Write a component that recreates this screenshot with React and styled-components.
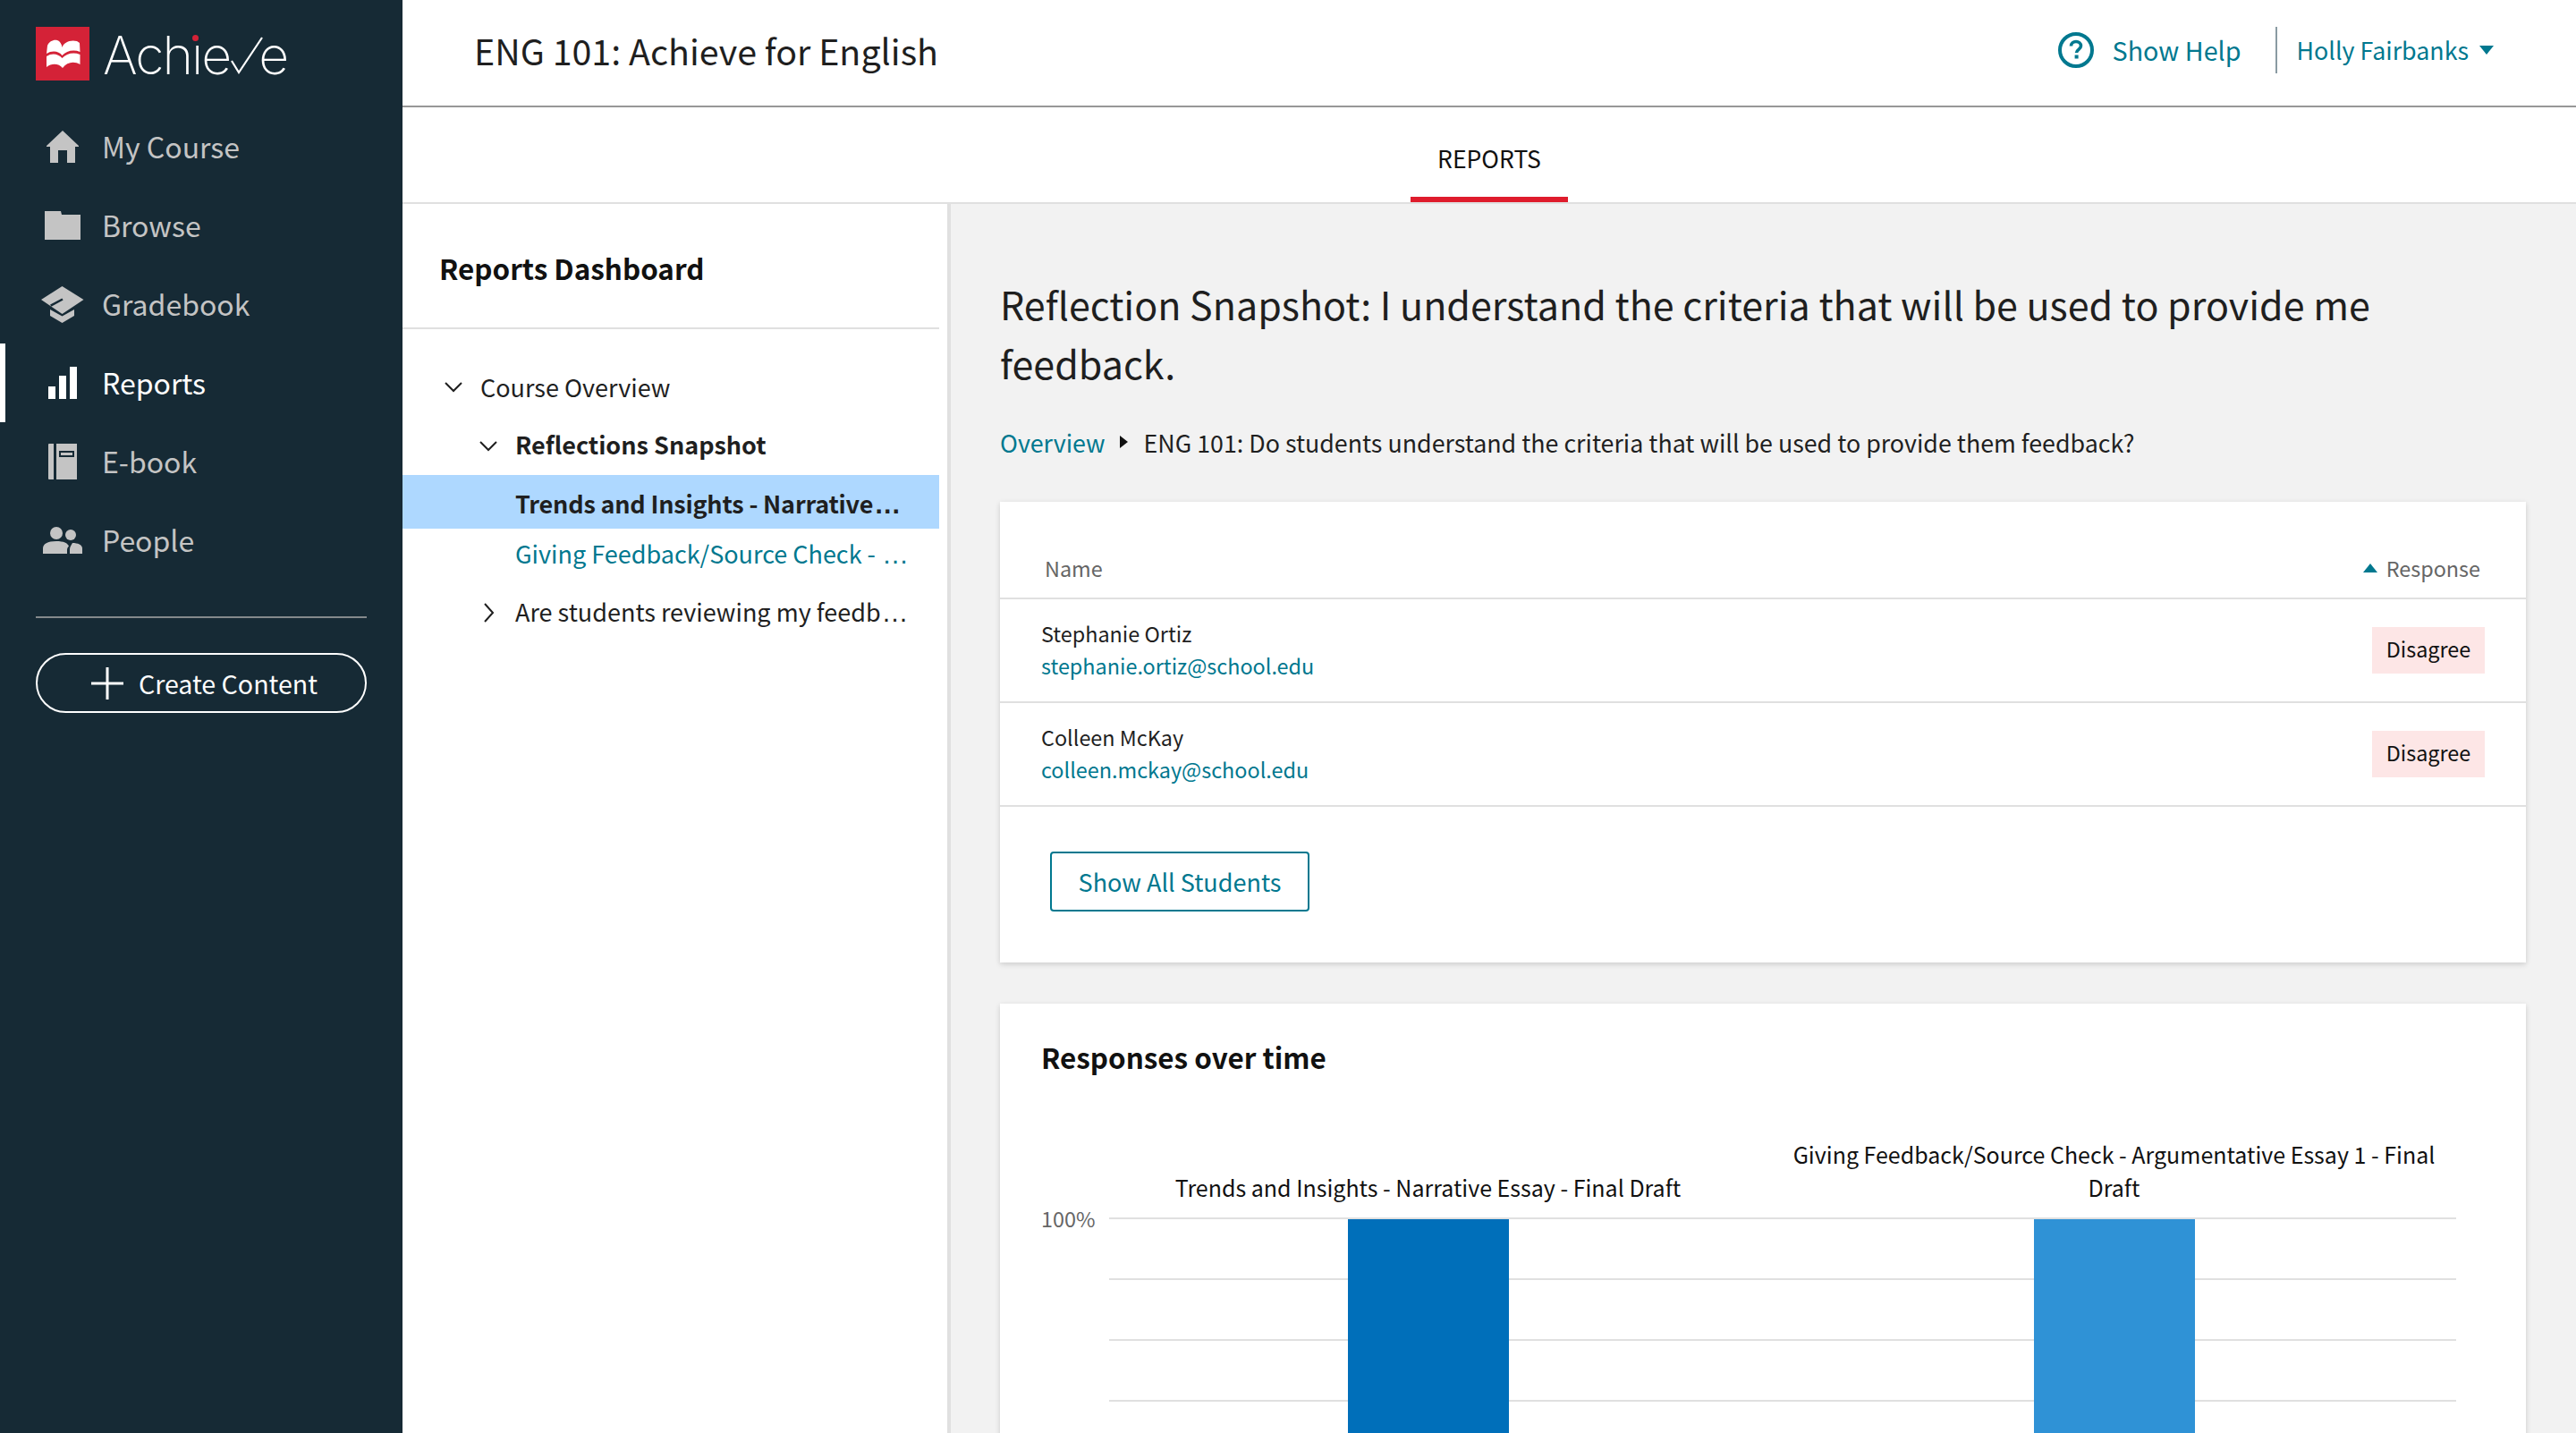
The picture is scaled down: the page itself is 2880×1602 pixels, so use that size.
import React from 'react'
import styled, { createGlobalStyle } from 'styled-components'

const FONT = `"Noto Sans CJK SC", "Noto Sans", sans-serif`
const TEAL = '#00788f'

const GlobalStyle = createGlobalStyle`
  html, body {
    margin: 0;
    height: 1602px;
    overflow: hidden;
    background: #fff;
  }
  body {
    font-family: ${FONT};
    color: #1f1f1f;
  }
`

const Page = styled.div`
  display: flex;
  width: 2880px;
  height: 1602px;
  overflow: hidden;
`

/* sidebar */
const Sidebar = styled.aside`
  flex: 0 0 450px;
  background: #162a35;
  padding-top: 30px;
  box-sizing: border-box;
`
const LogoRow = styled.div`
  display: flex;
  align-items: center;
  gap: 15px;
  padding-left: 40px;
  height: 60px;
`
const Wordmark = styled.div`
  display: flex;
  align-items: baseline;
  height: 60px;
  color: #fff;
  font-family: Inter, sans-serif;
  font-weight: 200;
  font-size: 59px;
  line-height: 64px;
  letter-spacing: -2px;
`
const LogoI = styled.span`
  position: relative;
  &::after {
    content: '';
    position: absolute;
    left: 50%;
    top: 9px;
    width: 7px;
    height: 7px;
    margin-left: -4.5px;
    border-radius: 50%;
    background: #d42237;
    box-shadow: 0 0 0 2px #162a35;
  }
`
const LogoCheck = styled.svg`
  margin: 0 -5px 0 1px;
`
const Nav = styled.nav`
  margin-top: 30px;
`
const NavItem = styled.a`
  display: flex;
  align-items: center;
  height: 88px;
  padding-left: 40px;
  font-size: 32px;
  line-height: 44px;
  color: ${(p) => (p.$active ? '#fff' : '#c4c4c4')};
  box-shadow: ${(p) => (p.$active ? 'inset 6px 0 0 #fff' : 'none')};
`
const NavIcon = styled.span`
  display: flex;
  align-items: center;
  justify-content: center;
  width: 60px;
  margin-right: 14px;
  color: inherit;
`
const NavLabel = styled.span`
  padding-bottom: 3px;
`
const SideDivider = styled.div`
  height: 2px;
  margin: 41px 40px 39px;
  background: #84898c;
`
const CreateButton = styled.button`
  display: flex;
  align-items: center;
  justify-content: center;
  gap: 17px;
  width: 370px;
  height: 67px;
  margin-left: 40px;
  padding: 0 0 0 7px;
  border: 2px solid #fff;
  border-radius: 34px;
  background: transparent;
  color: #fff;
  font-family: ${FONT};
  font-size: 28.6px;
  box-sizing: border-box;
`

/* right side */
const Column = styled.div`
  flex: 1;
  display: flex;
  flex-direction: column;
  min-width: 0;
`
const Header = styled.header`
  display: flex;
  align-items: center;
  justify-content: space-between;
  height: 112px;
  padding: 0 92px 6px 80px;
  border-bottom: 2px solid #979797;
  flex: none;
`
const CourseTitle = styled.h1`
  margin: 0;
  font-size: 39.4px;
  font-weight: 400;
  line-height: 56px;
  color: #1f1f1f;
`
const HeaderRight = styled.div`
  display: flex;
  align-items: center;
  color: ${TEAL};
`
const HelpLink = styled.a`
  display: flex;
  align-items: center;
  gap: 21px;
  font-size: 28.7px;
  line-height: 44px;
`
const HeaderRule = styled.div`
  width: 2px;
  height: 52px;
  margin: 0 22px 0 38px;
  background: #8a9ba3;
`
const UserMenu = styled.a`
  display: flex;
  align-items: center;
  gap: 12px;
  font-size: 26.8px;
  line-height: 44px;
`
const TabBar = styled.div`
  display: flex;
  justify-content: center;
  height: 106px;
  border-bottom: 2px solid #e0e0e0;
  flex: none;
`
const Tab = styled.a`
  display: flex;
  align-items: center;
  justify-content: center;
  width: 176px;
  padding-top: 12px;
  box-sizing: border-box;
  border-bottom: 6px solid #df1c2c;
  font-size: 26.5px;
  color: #111;
`
const Body = styled.div`
  flex: 1;
  display: flex;
  min-height: 0;
`

/* reports tree */
const Panel = styled.div`
  flex: 0 0 613px;
  width: 613px;
  min-width: 0;
  box-sizing: border-box;
  padding-right: 9px;
  border-right: 4px solid #e0e0e0;
`
const PanelHead = styled.div`
  height: 88px;
  padding: 50px 0 0 41px;
  border-bottom: 2px solid #e0e0e0;
  font-size: 31.4px;
  line-height: 44px;
  font-weight: 700;
  color: #111;
`
const Tree = styled.div`
  margin-top: 32px;
`
const TreeRow = styled.div`
  display: flex;
  align-items: center;
  height: ${(p) => p.$height}px;
  padding: 0 0 0 ${(p) => p.$indent}px;
  background: ${(p) => (p.$selected ? '#aed8ff' : 'transparent')};
  color: ${(p) => (p.$link ? TEAL : '#1f1f1f')};
  font-size: 27px;
  font-weight: ${(p) => (p.$bold ? 700 : 400)};
`
const Chevron = styled.span`
  flex: 0 0 40px;
  display: flex;
  align-items: center;
`
const ChevronRightSvg = styled.svg`
  margin-left: 5px;
`
const TreeLabel = styled.span`
  white-space: pre;
  line-height: 40px;
  padding-bottom: ${(p) => p.$lift || 0}px;
  padding-top: ${(p) => p.$drop || 0}px;
  letter-spacing: ${(p) => p.$tight || 0}px;
`
const Dots = styled.span`
  margin-left: 1px;
  font-family: "Liberation Sans", sans-serif;
  font-size: 30px;
  line-height: 30px;
  letter-spacing: 0;
`

/* main content */
const Content = styled.main`
  flex: 1;
  min-width: 0;
  background: #f2f2f2;
  padding: 78px 56px 0 55px;
  overflow: hidden;
`
const PageTitle = styled.h2`
  margin: 0;
  font-size: 43px;
  line-height: 66px;
  font-weight: 400;
  color: #1f1f1f;
`
const Crumbs = styled.div`
  display: flex;
  align-items: center;
  margin-top: 39px;
  font-size: 26.8px;
  line-height: 36px;
`
const CrumbLink = styled.a`
  color: ${TEAL};
`
const CrumbCaret = styled.span`
  width: 0;
  height: 0;
  margin: 0 18px 3px 16px;
  border-left: 9px solid #111;
  border-top: 7.5px solid transparent;
  border-bottom: 7.5px solid transparent;
`
const Card = styled.section`
  margin-top: ${(p) => p.$top}px;
  background: #fff;
  box-shadow: 0 2px 6px rgba(0, 0, 0, 0.16);
`
const TableHead = styled.div`
  display: flex;
  justify-content: space-between;
  align-items: flex-start;
  height: 51px;
  padding: 56px 51px 0 50px;
  border-bottom: 2px solid #e0e0e0;
  font-size: 23.4px;
  line-height: 36px;
  color: #666;
`
const SortHead = styled.span`
  display: flex;
  align-items: center;
  gap: 10px;
`
const SortCaret = styled.span`
  width: 0;
  height: 0;
  border-left: 8px solid transparent;
  border-right: 8px solid transparent;
  border-bottom: 10px solid ${TEAL};
`
const TableRow = styled.div`
  display: flex;
  align-items: center;
  justify-content: space-between;
  height: 114px;
  padding: 0 46px;
  border-bottom: 2px solid #e0e0e0;
`
const Person = styled.div`
  padding-bottom: 3px;
  font-size: 23.4px;
  line-height: 36px;
`
const PersonName = styled.div`
  color: #1f1f1f;
`
const PersonEmail = styled.a`
  display: block;
  color: ${TEAL};
`
const Badge = styled.span`
  display: flex;
  align-items: center;
  justify-content: center;
  width: 126px;
  height: 52px;
  padding-bottom: 4px;
  box-sizing: border-box;
  background: #fde6e6;
  font-size: 23.4px;
  color: #111;
`
const TableFooter = styled.div`
  padding: 50px 0 57px 56px;
`
const OutlineButton = styled.button`
  width: 290px;
  height: 67px;
  padding: 0;
  border: 2px solid ${TEAL};
  border-radius: 4px;
  background: #fff;
  color: ${TEAL};
  font-family: ${FONT};
  font-size: 27px;
  box-sizing: border-box;
`
const ChartCard = styled(Card)`
  padding: 38px 46px 0;
`
const ChartTitle = styled.h3`
  margin: 0;
  font-size: 31.4px;
  line-height: 44px;
  font-weight: 700;
  color: #111;
`
const ChartLabels = styled.div`
  display: grid;
  grid-template-columns: 767px 767px;
  align-items: end;
  margin: 68px 0 15px 49px;
  text-align: center;
  font-size: 25px;
  line-height: 37px;
  color: #111;
`
const ChartLabel = styled.div`
  padding: 0 20px;
`
const PlotRow = styled.div`
  display: flex;
`
const AxisLabel = styled.div`
  flex: 0 0 76px;
  margin-top: -17px;
  font-size: 23.4px;
  line-height: 36px;
  color: #666;
`

const HomeIcon = () => (
  <svg width="36" height="36" viewBox="0 0 36 36" fill="currentColor">
    <path d="M18 0 36 17v1h-4v18h-9V22H13v14H4V18H0v-1z" />
  </svg>
)
const FolderIcon = () => (
  <svg width="40" height="32" viewBox="0 0 40 32" fill="currentColor">
    <path d="M0 0h18l1 4h21v28H0z" />
  </svg>
)
const GradebookIcon = () => (
  <svg width="48" height="41" viewBox="0 0 48 41" fill="currentColor">
    <path d="M23.5 0 47.5 15 23.5 31 0 15z" />
    <path d="M10 26l13.5 7.5L37 26v7L23.5 41 10 33z" />
    <path d="M10.7 21.7 24 14.5" fill="none" stroke="#162a35" strokeWidth="2.5" />
  </svg>
)
const BarsIcon = () => (
  <svg width="32" height="36" viewBox="0 0 32 36" fill="currentColor">
    <path d="M0 22h8v14H0zM12 10h8v26h-8zM24 0h8v36h-8z" />
  </svg>
)
const BookIcon = () => (
  <svg width="32" height="40" viewBox="0 0 32 40" fill="currentColor">
    <path d="M1 0h5v40H1a1 1 0 0 1-1-1V1a1 1 0 0 1 1-1z" />
    <path fillRule="evenodd" d="M9 0h23v40H9zM12 8v7h17V8z" />
    <path d="M14 10h13v3H14z" />
  </svg>
)
const PeopleIcon = () => (
  <svg width="44" height="30" viewBox="0 0 44 30" fill="currentColor">
    <circle cx="15" cy="7" r="7" />
    <circle cx="31" cy="9" r="6" />
    <path d="M0 30v-6c0-5 5-8 15-8 8 0 13 2 14 6-1 0-2 2-2 4v4z" />
    <path d="M30 30v-5c0-3 2-5 3-7 6 0 11 2 11 6v6z" />
  </svg>
)
const BookLogo = () => (
  <svg width="60" height="60" viewBox="0 0 60 60">
    <rect width="60" height="60" fill="#d42237" />
    <path fill="#fff" d="M13 21C15 16 20 14 24 15c3 1 5 4 5.5 8 1.5-5 8.5-9 16.5-7l3 2 .5 10c-7.5-3-15.5-1-20 4-3.5-5-11.5-6-17.5-2z" />
    <path fill="#fff" d="M12 33c6-4 13-3 17.5 2 4.5-5 12.5-7 20-4v11c-6.5-4-14.5-3-19.5 4-4-5-12-6-18-1z" />
  </svg>
)
const HelpIcon = () => (
  <svg width="40" height="40" viewBox="0 0 40 40">
    <circle cx="20" cy="20" r="18" fill="none" stroke={TEAL} strokeWidth="4" />
    <path d="M14.5 15.5c0-3 2.5-5 5.5-5s5.5 2 5.5 4.8c0 4-5 4-5 7.7" fill="none" stroke={TEAL} strokeWidth="3.6" />
    <rect x="18.6" y="25.5" width="4" height="4" fill={TEAL} />
  </svg>
)
const CaretDown = () => (
  <svg width="16" height="10" viewBox="0 0 16 10" fill={TEAL}>
    <path d="M0 0h16L8 10z" />
  </svg>
)
const PlusIcon = () => (
  <svg width="36" height="36" viewBox="0 0 36 36" fill="#fff">
    <path d="M16.5 0h3v16.5H36v3H19.5V36h-3V19.5H0v-3h16.5z" />
  </svg>
)
const ChevronDown = () => (
  <svg width="20" height="12" viewBox="0 0 20 12" fill="none" stroke="#1f1f1f" strokeWidth="2">
    <path d="M1 1l9 9 9-9" />
  </svg>
)
const ChevronRight = () => (
  <ChevronRightSvg width="12" height="22" viewBox="0 0 12 22" fill="none" stroke="#1f1f1f" strokeWidth="2">
    <path d="M1 1l9 10-9 10" />
  </ChevronRightSvg>
)

const navItems = [
  { label: 'My Course', icon: <HomeIcon /> },
  { label: 'Browse', icon: <FolderIcon /> },
  { label: 'Gradebook', icon: <GradebookIcon /> },
  { label: 'Reports', icon: <BarsIcon />, active: true },
  { label: 'E-book', icon: <BookIcon /> },
  { label: 'People', icon: <PeopleIcon /> },
]

const students = [
  { name: 'Stephanie Ortiz', email: 'stephanie.ortiz@school.edu' },
  { name: 'Colleen McKay', email: 'colleen.mckay@school.edu' },
]

const App = () => (
  <Page>
    <GlobalStyle />
    <Sidebar>
      <LogoRow>
        <BookLogo />
        <Wordmark>
          Ach<LogoI>i</LogoI>e
          <LogoCheck width="36" height="42" viewBox="0 0 36 42" fill="none" stroke="#fff" strokeWidth="2.2">
            <path d="M1 27l8 13L35 1" />
          </LogoCheck>
          e
        </Wordmark>
      </LogoRow>
      <Nav>
        {navItems.map((item) => (
          <NavItem key={item.label} $active={item.active}>
            <NavIcon>{item.icon}</NavIcon>
            <NavLabel>{item.label}</NavLabel>
          </NavItem>
        ))}
      </Nav>
      <SideDivider />
      <CreateButton>
        <PlusIcon />
        Create Content
      </CreateButton>
    </Sidebar>
    <Column>
      <Header>
        <CourseTitle>ENG 101: Achieve for English</CourseTitle>
        <HeaderRight>
          <HelpLink>
            <HelpIcon />
            Show Help
          </HelpLink>
          <HeaderRule />
          <UserMenu>
            Holly Fairbanks
            <CaretDown />
          </UserMenu>
        </HeaderRight>
      </Header>
      <TabBar>
        <Tab>REPORTS</Tab>
      </TabBar>
      <Body>
        <Panel>
          <PanelHead>Reports Dashboard</PanelHead>
          <Tree>
            <TreeRow $height={66} $indent={47}>
              <Chevron><ChevronDown /></Chevron>
              <TreeLabel $lift={1}>Course Overview</TreeLabel>
            </TreeRow>
            <TreeRow $height={65} $indent={86} $bold>
              <Chevron><ChevronDown /></Chevron>
              <TreeLabel $lift={3}>Reflections Snapshot</TreeLabel>
            </TreeRow>
            <TreeRow $height={60} $indent={126} $bold $selected>
              <TreeLabel $drop={4} $tight={-0.2}>Trends and Insights - Narrative<Dots>…</Dots></TreeLabel>
            </TreeRow>
            <TreeRow $height={59} $indent={126} $link>
              <TreeLabel $lift={3}>Giving Feedback/Source Check - <Dots>…</Dots></TreeLabel>
            </TreeRow>
            <TreeRow $height={70} $indent={86}>
              <Chevron><ChevronRight /></Chevron>
              <TreeLabel $lift={2}>Are students reviewing my feedb<Dots>…</Dots></TreeLabel>
            </TreeRow>
          </Tree>
        </Panel>
        <Content>
          <PageTitle>Reflection Snapshot: I understand the criteria that will be used to provide me feedback.</PageTitle>
          <Crumbs>
            <CrumbLink>Overview</CrumbLink>
            <CrumbCaret />
            ENG 101: Do students understand the criteria that will be used to provide them feedback?
          </Crumbs>
          <Card $top={48}>
            <TableHead>
              <span>Name</span>
              <SortHead>
                <SortCaret />
                Response
              </SortHead>
            </TableHead>
            {students.map((s) => (
              <TableRow key={s.email}>
                <Person>
                  <PersonName>{s.name}</PersonName>
                  <PersonEmail>{s.email}</PersonEmail>
                </Person>
                <Badge>Disagree</Badge>
              </TableRow>
            ))}
            <TableFooter>
              <OutlineButton>Show All Students</OutlineButton>
            </TableFooter>
          </Card>
          <ChartCard $top={46}>
            <ChartTitle>Responses over time</ChartTitle>
            <ChartLabels>
              <ChartLabel>Trends and Insights - Narrative Essay - Final Draft</ChartLabel>
              <ChartLabel>Giving Feedback/Source Check - Argumentative Essay 1 - Final Draft</ChartLabel>
            </ChartLabels>
            <PlotRow>
              <AxisLabel>100%</AxisLabel>
              <svg width="1506" height="280" viewBox="0 0 1506 280">
                {[1, 69, 137, 205, 273].map((y) => (
                  <rect key={y} x="0" y={y - 1} width="1506" height="2" fill="#e0e0e0" />
                ))}
                <rect x="267" y="2" width="180" height="278" fill="#006fba" />
                <rect x="1034" y="2" width="180" height="278" fill="#2f92d6" />
              </svg>
            </PlotRow>
          </ChartCard>
        </Content>
      </Body>
    </Column>
  </Page>
)

export default App
